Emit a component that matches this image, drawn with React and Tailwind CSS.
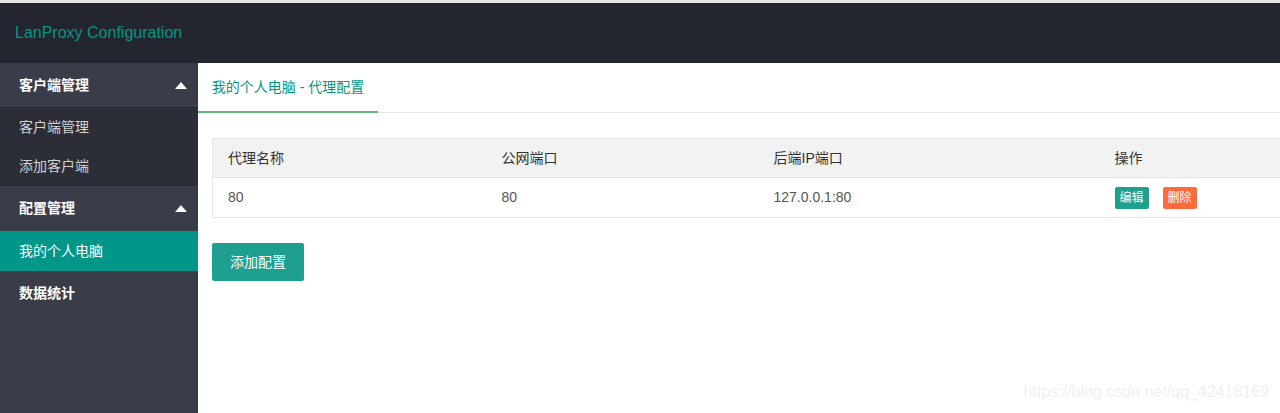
import React from 'react';

const font = { fontFamily: '"Liberation Sans", "Noto Sans CJK SC", sans-serif' };

const Caret = () => (
  <svg width="12" height="7" viewBox="0 0 12 7" className="fill-white">
    <polygon points="6,0 12,7 0,7" />
  </svg>
);

const App = () => {
  return (
    <div className="w-[1280px] h-[413px] flex flex-col overflow-hidden bg-white text-[14px]" style={font}>
      {/* Header */}
      <div className="h-[3px] bg-[#e6e6e6]" />
      <div className="h-[60px] bg-[#23262e] flex items-center px-[15px]">
        <span className="text-[#009688] text-[16px]">LanProxy Configuration</span>
      </div>

      <div className="flex flex-1">
        {/* Sidebar */}
        <div className="w-[198px] shrink-0 bg-[#393d49] flex flex-col">
          <div className="h-[44px] flex items-center justify-between pl-[19px] pr-[11px] text-white font-bold">
            <span>客户端管理</span>
            <Caret />
          </div>
          <div className="bg-[#2b2e37] text-[#d2d2d2]">
            <div className="h-[40px] flex items-center pl-[19px]">客户端管理</div>
            <div className="h-[39px] flex items-center pl-[19px]">添加客户端</div>
          </div>
          <div className="h-[45px] flex items-center justify-between pl-[19px] pr-[11px] text-white font-bold">
            <span>配置管理</span>
            <Caret />
          </div>
          <div className="h-[40px] flex items-center pl-[19px] bg-[#009688] text-white">我的个人电脑</div>
          <div className="h-[44px] flex items-center pl-[19px] text-white font-bold">数据统计</div>
        </div>

        {/* Main */}
        <div className="flex-1 min-w-0 flex flex-col relative overflow-hidden">
          <div className="h-[50px] border-b border-[#e6e6e6] flex">
            <div className="w-[180px] flex items-center justify-center text-[#009688] border-b-2 border-[#5fb878] mb-[-1px]">
              我的个人电脑 - 代理配置
            </div>
          </div>

          <div className="pl-[14px] pt-[25px]">
            <table className="w-[1100px] border border-[#e6e6e6] border-collapse text-left">
              <thead>
                <tr className="bg-[#f2f2f2] h-[39px] text-[#333]">
                  <th className="font-normal pl-[15px] w-[289px] border-b border-[#e6e6e6]">代理名称</th>
                  <th className="font-normal w-[272px] border-b border-[#e6e6e6]">公网端口</th>
                  <th className="font-normal w-[341px] border-b border-[#e6e6e6]">后端IP端口</th>
                  <th className="font-normal border-b border-[#e6e6e6]">操作</th>
                </tr>
              </thead>
              <tbody>
                <tr className="h-[40px] text-[#555]">
                  <td className="pl-[15px]">80</td>
                  <td>80</td>
                  <td>127.0.0.1:80</td>
                  <td>
                    <div className="flex gap-[14px]">
                      <span className="h-[22px] px-[5px] flex items-center bg-[#1e9f8f] text-white text-[12px] rounded-[2px]">编辑</span>
                      <span className="h-[22px] px-[5px] flex items-center bg-[#ff6a3d] text-white text-[12px] rounded-[2px]">删除</span>
                    </div>
                  </td>
                </tr>
              </tbody>
            </table>

            <button className="mt-[25px] h-[38px] w-[92px] bg-[#1e9f8f] text-white rounded-[2px]">添加配置</button>
          </div>

          <div className="absolute right-[11px] bottom-[9px] text-[#f0f0f0] text-[16px]">https://blog.csdn.net/qq_42418169</div>
        </div>
      </div>
    </div>
  );
};

export default App;
